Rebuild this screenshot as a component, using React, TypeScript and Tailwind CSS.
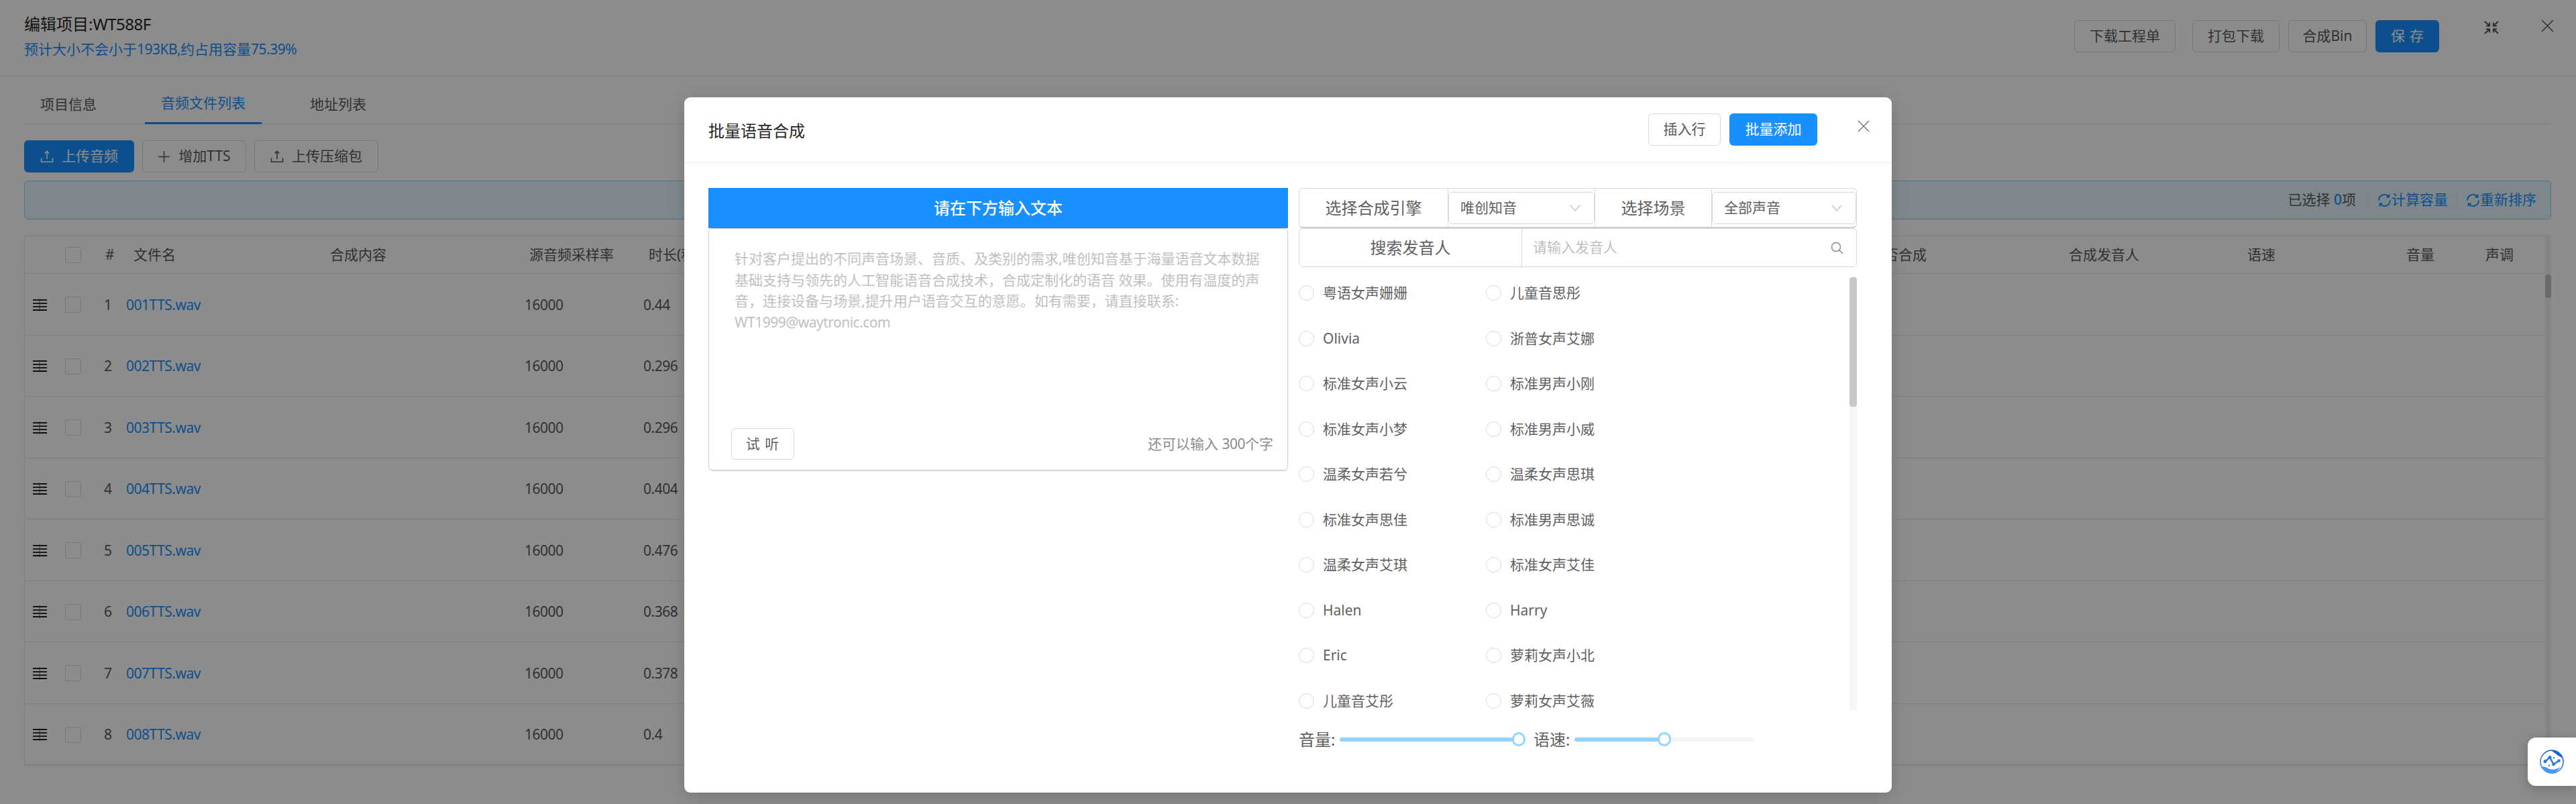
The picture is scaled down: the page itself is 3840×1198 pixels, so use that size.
import React from "react";

const FONT = "font-['Noto_Sans','Noto_Sans_CJK_SC',sans-serif]";
const LATIN = "tracking-[-0.5px]";

const rows = [
  ["1", "001TTS.wav", "0.44"],
  ["2", "002TTS.wav", "0.296"],
  ["3", "003TTS.wav", "0.296"],
  ["4", "004TTS.wav", "0.404"],
  ["5", "005TTS.wav", "0.476"],
  ["6", "006TTS.wav", "0.368"],
  ["7", "007TTS.wav", "0.378"],
  ["8", "008TTS.wav", "0.4"],
];

const voices = [
  ["粤语女声姗姗", "儿童音思彤"],
  ["Olivia", "浙普女声艾娜"],
  ["标准女声小云", "标准男声小刚"],
  ["标准女声小梦", "标准男声小威"],
  ["温柔女声若兮", "温柔女声思琪"],
  ["标准女声思佳", "标准男声思诚"],
  ["温柔女声艾琪", "标准女声艾佳"],
  ["Halen", "Harry"],
  ["Eric", "萝莉女声小北"],
  ["儿童音艾彤", "萝莉女声艾薇"],
];

function UploadIcon() {
  return (
    <svg width="20" height="20" viewBox="0 0 20 20" fill="none" stroke="currentColor" strokeWidth="1.6">
      <path d="M10 14V2.5M6.8 5.8 10 2.2l3.2 3.6" />
      <path d="M1.5 12.5v5.7h17v-5.7" />
    </svg>
  );
}

function SyncIcon() {
  return (
    <svg width="21" height="21" viewBox="0 0 21 21" fill="none" stroke="currentColor" strokeWidth="1.8" className="shrink-0">
      <path d="M2 10.5a8.5 8.5 0 0 1 14.5-6" />
      <path d="M19 10.5a8.5 8.5 0 0 1-14.5 6" />
      <path d="M17.5 1.5v4h-4M3.5 19.5v-4h4" />
    </svg>
  );
}

function HandleIcon() {
  return (
    <svg width="21" height="21" viewBox="0 0 21 21" className="shrink-0">
      <rect x="0" y="2" width="21" height="2" fill="#262626" />
      <rect x="0" y="7" width="21" height="2" fill="#333" />
      <rect x="0" y="12" width="21" height="2" fill="#333" />
      <rect x="0" y="17" width="21" height="2" fill="#1c1c1c" />
      <rect x="9" y="1" width="2" height="19" fill="#333" opacity="0.35" />
    </svg>
  );
}

function Close({ size = 18, color = "#595959" }: { size?: number; color?: string }) {
  return (
    <svg width={size} height={size} viewBox="0 0 18 18" fill="none" stroke={color} strokeWidth="1.5">
      <path d="M1 1l16 16M17 1 1 17" />
    </svg>
  );
}

function CompressIcon() {
  return (
    <svg width="22" height="20" viewBox="0 0 22 20" fill="none" stroke="#4a4a4a" strokeWidth="1.8">
      <path d="M1 1l6.5 6M3 7.6h5.2V2.4" />
      <path d="M21 1l-6.5 6M19 7.6h-5.2V2.4" />
      <path d="M1 19l6.5-6M3 12.4h5.2v5.2" />
      <path d="M21 19l-6.5-6M19 12.4h-5.2v5.2" />
    </svg>
  );
}

function ChevronIcon() {
  return (
    <svg width="16" height="10" viewBox="0 0 16 10" fill="none" stroke="#bfbfbf" strokeWidth="1.3">
      <path d="M1 1l7 8 7-8" />
    </svg>
  );
}

function SearchIcon() {
  return (
    <svg width="19" height="19" viewBox="0 0 19 19" fill="none" stroke="#8c8c8c" strokeWidth="1.5">
      <circle cx="8" cy="8" r="6.5" />
      <path d="M12.8 12.8 18 18" />
    </svg>
  );
}

function Logo() {
  return (
    <svg width="36" height="36" viewBox="0 0 36 36">
      <defs>
        <linearGradient id="lg" x1="0.7" y1="0" x2="0.3" y2="1">
          <stop offset="0" stopColor="#0f5fd0" />
          <stop offset="1" stopColor="#4a94f5" />
        </linearGradient>
      </defs>
      <circle cx="18" cy="18" r="17" fill="#fff" stroke="url(#lg)" strokeWidth="1.6" />
      <path d="M17 1C24 1 31 4.5 34.6 12.5 29 10.5 24 6.5 17 1Z" fill="#1564d4" />
      <path d="M3 25.5C8 24 12 29 18 29.5c4.5.4 8-1 12.5-3.5C27 32 22.5 35 18 35 11 35 6 31 3 25.5Z" fill="#4a94f5" />
      <path d="M8 17.5 15 11.5 20.5 22 28.5 16.5" fill="none" stroke="#2f78e6" strokeWidth="2.6" strokeLinecap="round" strokeLinejoin="round" />
      <g fill="#2f78e6">
        <circle cx="8" cy="17.5" r="2.5" />
        <circle cx="15" cy="11.5" r="2.5" />
        <circle cx="20.5" cy="22" r="2.3" />
        <circle cx="28.5" cy="16.5" r="2.3" />
        <circle cx="21" cy="12" r="1.2" />
        <circle cx="14" cy="23.5" r="1.2" />
      </g>
    </svg>
  );
}

function HeaderButton({ children, primary, className }: { children: React.ReactNode; primary?: boolean; className: string }) {
  return (
    <button
      className={
        "h-[48px] rounded-[6px] text-[21px] flex items-center justify-center gap-[12px] " +
        (primary ? "bg-[#1890ff] text-white " : "border border-[#d9d9d9] bg-white text-[#595959] ") +
        className
      }
    >
      {children}
    </button>
  );
}

function Checkbox() {
  return <div className="w-[24px] h-[24px] border border-[#d9d9d9] rounded-[3px] bg-white shrink-0" />;
}

function Page() {
  return (
    <div className="flex flex-col h-full">
      <div className="h-[114px] border-b border-[#e8e8e8] pl-[36px] pr-[33px] flex justify-between shrink-0">
        <div className="pt-[18px]">
          <div className="text-[24px] leading-[36px] text-[#262626]">编辑项目:<span className={LATIN}>WT588F</span></div>
          <div className="text-[21px] leading-[38px] text-[#1890ff]">预计大小不会小于<span className={LATIN}>193KB,</span>约占用容量<span className={LATIN}>75.39%</span></div>
        </div>
        <div className="flex items-start pt-[30px]">
          <HeaderButton className="w-[151px] mr-[25px]">下载工程单</HeaderButton>
          <HeaderButton className="w-[130px] mr-[13px]">打包下载</HeaderButton>
          <HeaderButton className="w-[117px] mr-[13px]">合成Bin</HeaderButton>
          <HeaderButton primary className="w-[95px] mr-[67px] tracking-[7px] pl-[7px]">保存</HeaderButton>
          <div className="mt-[1px] mr-[63px]"><CompressIcon /></div>
          <div className="-mt-[1px]"><Close size={19} /></div>
        </div>
      </div>

      <div className="pl-[36px] pr-[37px] flex flex-col flex-1 min-h-0">
        <div className="h-[71px] border-b border-[#e8e8e8] flex items-end text-[21px] text-[#595959] shrink-0">
          <div className="w-[180px] pl-[24px] h-[58px] leading-[58px]">项目信息</div>
          <div className="w-[174px] h-[58px] leading-[52px] text-center text-[#1890ff] border-b-[3px] border-[#1890ff] -mb-[1px]">音频文件列表</div>
          <div className="pl-[72px] h-[58px] leading-[58px]">地址列表</div>
        </div>

        <div className="flex gap-[12px] mt-[24px] shrink-0">
          <HeaderButton primary className="w-[164px]"><UploadIcon />上传音频</HeaderButton>
          <HeaderButton className="w-[155px]">
            <svg width="19" height="19" viewBox="0 0 19 19" stroke="#595959" strokeWidth="1.5"><path d="M9.5 1v17M1 9.5h17" /></svg>
            增加TTS
          </HeaderButton>
          <HeaderButton className="w-[185px]"><UploadIcon />上传压缩包</HeaderButton>
        </div>

        <div className="h-[58px] mt-[12px] border border-[#91d5ff] bg-[#e6f7ff] rounded-[6px] flex items-center justify-end pr-[21px] text-[21px] text-[#595959] shrink-0">
          <span>已选择 <span className="text-[#1890ff] font-medium">0</span>项</span>
          <div className="w-px h-[21px] bg-[#d9e8f0] ml-[17px] mr-[14px]" />
          <span className="flex items-center text-[#1890ff]"><SyncIcon />计算容量</span>
          <div className="w-px h-[21px] bg-[#d9e8f0] ml-[12px] mr-[14px]" />
          <span className="flex items-center text-[#1890ff]"><SyncIcon />重新排序</span>
        </div>

        <div className="mt-[24px] border-l border-t border-b border-[#e8e8e8] h-[790px] relative shrink-0 text-[21px] text-[#595959]">
          <div className="h-[56px] border-b border-[#e8e8e8] flex items-center">
            <div className="w-[60px] shrink-0" />
            <Checkbox />
            <div className="w-[36px] pl-[36px] shrink-0 leading-none">#</div>
            <div className="w-[335px] pl-[42px] shrink-0 whitespace-nowrap">文件名</div>
            <div className="w-[297px] shrink-0 whitespace-nowrap">合成内容</div>
            <div className="w-[178px] shrink-0 whitespace-nowrap">源音频采样率</div>
            <div className="w-[1821px] shrink-0 whitespace-nowrap">时长(秒)</div>
            <div className="w-[296px] shrink-0 whitespace-nowrap">是否合成</div>
            <div className="w-[266px] shrink-0 whitespace-nowrap">合成发音人</div>
            <div className="w-[237px] shrink-0 whitespace-nowrap">语速</div>
            <div className="w-[118px] shrink-0 whitespace-nowrap">音量</div>
            <div className="whitespace-nowrap">声调</div>
          </div>
          {rows.map((r) => (
            <div key={r[0]} className="h-[91.5px] pt-[2px] border-b border-[#e8e8e8] last:border-b-0 flex items-center">
              <div className="w-[60px] pl-[12px] shrink-0"><HandleIcon /></div>
              <Checkbox />
              <div className="w-[58px] pl-[22px] text-center shrink-0">{r[0]}</div>
              <div className={"w-[603px] pl-[9px] shrink-0 text-[#1890ff] " + LATIN}>{r[1]}</div>
              <div className={"w-[177px] shrink-0 " + LATIN}>16000</div>
              <div className={"shrink-0 " + LATIN}>{r[2]}</div>
            </div>
          ))}
          <div className="absolute right-0 top-0 bottom-0 w-[9px] bg-[#f1f1f1]">
            <div className="absolute top-[57px] left-0 w-[9px] h-[35px] rounded-[4px] bg-[#c1c1c1]" />
          </div>
        </div>
      </div>
    </div>
  );
}

function Dialog() {
  return (
    <div className="w-[1800px] h-[1036px] bg-white rounded-[9px] shadow-[0_6px_24px_rgba(0,0,0,0.15)] flex flex-col text-[#5f5f5f]">
      <div className="h-[98px] border-b border-[#e8e8e8] flex items-start pl-[36px] shrink-0">
        <div className="text-[24px] leading-[36px] text-[#262626] mt-[32px] flex-1">批量语音合成</div>
        <HeaderButton className="w-[108px] mt-[24px]">插入行</HeaderButton>
        <HeaderButton primary className="w-[131px] mt-[24px] ml-[13px]">批量添加</HeaderButton>
        <div className="mt-[34px] ml-[60px] mr-[33px]"><Close size={18} color="#7a7a7a" /></div>
      </div>

      <div className="flex pl-[36px] pt-[37px] flex-1 min-h-0">
        <div className="w-[864px] shrink-0">
          <div className="h-[60px] bg-[#1890ff] text-white text-[24px] font-medium flex items-center justify-center">请在下方输入文本</div>
          <div className="h-[361px] border border-[#d0d0d0] rounded-[6px] shadow-[0_1px_2px_rgba(0,0,0,0.15)] flex flex-col justify-between px-[38px] pt-[29px] pb-[15px] relative">
            <div className="text-[21px] leading-[31.5px] text-[#bfbfbf] whitespace-nowrap">
              <div>针对客户提出的不同声音场景、音质、及类别的需求,唯创知音基于海量语音文本数据</div>
              <div>基础支持与领先的人工智能语音合成技术，合成定制化的语音 效果。使用有温度的声</div>
              <div>音，连接设备与场景,提升用户语音交互的意愿。如有需要，请直接联系:</div>
              <div className={LATIN}>WT1999@waytronic.com</div>
            </div>
            <div className="flex items-center justify-between -ml-[5px] -mr-[17px]">
              <div className="w-[94px] h-[47px] border border-[#d9d9d9] rounded-[6px] flex items-center justify-center text-[21px] tracking-[1px]">试 听</div>
              <div className="text-[21px] text-[#8c8c8c]">还可以输入 <span className={LATIN}>300</span>个字</div>
            </div>
          </div>
        </div>

        <div className="w-[832px] ml-[16px] shrink-0 flex flex-col">
          <div className="h-[60px] border border-b-2 border-[#d9d9d9] border-b-[#c8ced4] rounded-[6px] flex items-stretch text-[24px]">
            <div className="w-[222px] flex items-center justify-center border-r border-[#d9d9d9] shrink-0">选择合成引擎</div>
            <div className="w-[218px] h-[48px] self-center border border-[#d9d9d9] rounded-[6px] flex items-center justify-between pl-[17px] pr-[20px] text-[21px] shrink-0"><span>唯创知音</span><ChevronIcon /></div>
            <div className="w-[175px] flex items-center justify-center border-x border-[#d9d9d9] shrink-0">选择场景</div>
            <div className="flex-1 h-[48px] self-center border border-[#d9d9d9] rounded-[6px] flex items-center justify-between pl-[17px] pr-[20px] text-[21px]"><span>全部声音</span><ChevronIcon /></div>
          </div>
          <div className="h-[58px] border border-[#d9d9d9] rounded-[6px] flex items-stretch">
            <div className="w-[332px] flex items-center justify-center border-r border-[#d9d9d9] text-[24px] shrink-0">搜索发音人</div>
            <div className="flex-1 flex items-center justify-between pl-[16px] pr-[19px] text-[21px] text-[#bfbfbf]"><span>请输入发音人</span><SearchIcon /></div>
          </div>

          <div className="flex mt-[15px] h-[645px] relative overflow-hidden">
            <div className="flex-1 -mt-[10px]">
              {voices.map((v) => (
                <div key={v[0]} className="h-[67.5px] flex items-center">
                  {v.map((name) => (
                    <div key={name} className="flex items-center w-[279px] text-[21px]">
                      <div className="w-[23px] h-[23px] rounded-full border border-[#d9d9d9] mr-[13px]" />
                      <span>{name}</span>
                    </div>
                  ))}
                </div>
              ))}
            </div>
            <div className="w-[11px] bg-[#f5f5f5] rounded-[4px] shrink-0 relative">
              <div className="absolute top-0 left-0 w-[11px] h-[193px] bg-[#c8c8c8] rounded-[4px]" />
            </div>
          </div>

          <div className="flex items-center h-[42px] mt-[23px] text-[24px]">
            <span className="w-[61px] shrink-0">音量:</span>
            <div className="w-[269px] h-[6px] rounded-full bg-[#91d5ff] relative shrink-0">
              <div className="absolute right-[-8px] top-[-8px] w-[20px] h-[21px] rounded-full bg-white border-[3px] border-[#91d5ff]" />
            </div>
            <span className="w-[61px] ml-[20px] shrink-0">语速:</span>
            <div className="w-[267px] h-[6px] rounded-full bg-[#f5f5f5] relative shrink-0">
              <div className="absolute left-0 top-0 h-[6px] w-[134px] rounded-full bg-[#91d5ff]" />
              <div className="absolute left-[124px] top-[-8px] w-[20px] h-[21px] rounded-full bg-white border-[3px] border-[#91d5ff]" />
            </div>
          </div>
        </div>
      </div>
    </div>
  );
}

export default function App() {
  return (
    <div className={"relative w-[3840px] h-[1198px] overflow-hidden bg-white " + FONT}>
      <Page />
      <div className="absolute inset-0 bg-black/45 flex justify-center pt-[145px]">
        <Dialog />
      </div>
      <div className="absolute right-0 top-[1099px] w-[72px] h-[72px] bg-white rounded-l-[12px] shadow-[0_4px_16px_rgba(0,0,0,0.2)] flex items-center pl-[18px]">
        <Logo />
      </div>
    </div>
  );
}
